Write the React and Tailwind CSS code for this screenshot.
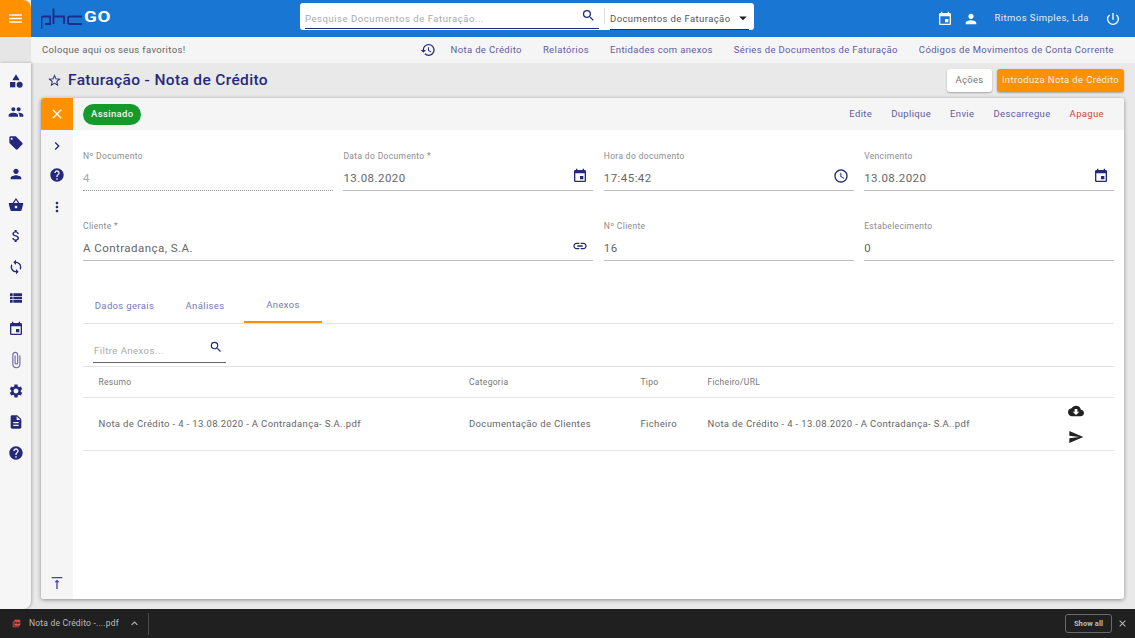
import React from "react";
import { MdMenu, MdCategory, MdPeople, MdLocalOffer, MdPerson, MdShoppingBasket, MdAttachMoney, MdSync, MdViewList, MdEvent, MdAttachFile, MdSettings, MdDescription, MdHelp, MdSearch, MdArrowDropDown, MdPowerSettingsNew, MdHistory, MdStarBorder, MdClose, MdChevronRight, MdMoreVert, MdAccessTime, MdLink, MdCloudDownload, MdSend, MdVerticalAlignTop, MdExpandLess, MdPictureAsPdf } from "react-icons/md";

const navy = "text-[#25297c]";

function Field({ label, value, icon, dotted, muted, className = "" }) {
  return (
    <div className={`relative h-[50px] ${className}`}>
      <div className="h-[22px] pt-[4px] text-[8.5px] leading-[12px] tracking-[0.35px] text-[#8c8c8c]">{label}</div>
      <div className={`flex h-[22px] items-center justify-between pr-[5px] text-[11.5px] tracking-[0.45px] ${muted ? "text-[#a8a8a8]" : "text-[#666]"}`}>
        <span>{value}</span>
        {icon && <span className={`-mt-[7px] ${navy}`}>{icon}</span>}
      </div>
      <div className={dotted ? "border-b border-dotted border-[#9a9a9a]" : "border-b border-[#bdbdbd]"} />
    </div>
  );
}

const sideIcons = [MdCategory, MdPeople, MdLocalOffer, MdPerson, MdShoppingBasket, MdAttachMoney, MdSync, MdViewList, MdEvent, MdAttachFile, MdSettings, MdDescription, MdHelp];

export default function App() {
  return (
    <div className="flex h-[638px] w-[1135px] flex-col overflow-hidden bg-[#e9e9e9] font-['Roboto',sans-serif]">
      <div className="flex min-h-0 flex-1">
        {/* left column */}
        <div className="relative z-10 flex w-[31px] shrink-0 flex-col">
          <div className="flex h-[37px] items-center justify-center rounded-tr-[8px] bg-[#ff9100] text-white">
            <MdMenu size={17} />
          </div>
          <div className="h-[26px] bg-[#e6e6e6]" />
          <div className={`flex flex-1 flex-col items-center rounded-br-[8px] bg-[#f6f6f6] pt-[2px] shadow-[1px_0_3px_rgba(0,0,0,0.25)] ${navy}`}>
            {sideIcons.map((I, i) => (
              <div key={i} className={`flex h-[31px] w-full items-center justify-center ${i === 9 ? "text-[#6d63a8]" : ""}`}>
                <I size={i === 9 ? 18 : 16} className={i === 9 ? "" : ""} />
              </div>
            ))}
          </div>
        </div>

        {/* right column */}
        <div className="flex min-w-0 flex-1 flex-col">
          <header className="flex h-[37px] items-center bg-[#1976d2]">
            <div className="ml-[10px] flex w-[259px] items-center">
              <svg width="41" height="21" viewBox="0 0 41 21" fill="none" stroke="#1f2a8a" strokeWidth="1.8">
                <path d="M0.5 20.5V10.5Q0.5 8.5 2.5 8.5H9V16H4" />
                <path d="M12.5 0.5V16M12.5 8.5H23V16" />
                <path d="M41 8.5H29Q27 8.5 27 10.5V14Q27 16 29 16H41" />
              </svg>
              <span className="ml-[2px] -mt-[3px] text-[15px] font-bold leading-none tracking-[0.5px] text-white [transform:scaleX(1.25)] origin-left">GO</span>
            </div>
            <div className="flex h-[27px] w-[454px] -mt-[5px] items-center rounded-[3px] bg-white">
              <div className="relative flex h-full w-[304px] items-center pl-[5px] pr-[8px] pt-[7px] border-b border-transparent">
                <span className="flex-1 text-[9.5px] tracking-[0.55px] text-[#a9a9a9]">Pesquise Documentos de Faturação...</span>
                <MdSearch size={15} className={`-mt-[7px] ${navy}`} />
                <div className="absolute bottom-0 left-[5px] right-[5px] h-px bg-[#25297c]" />
              </div>
              <div className="h-[16px] w-px bg-[#e0e0e0]" />
              <div className="relative flex h-full flex-1 items-center pl-[5px] pt-[7px]">
                <span className="flex-1 text-[9.5px] tracking-[0.4px] text-[#555]">Documentos de Faturação</span>
                <MdArrowDropDown size={18} className="mr-[2px] -mt-[4px] text-[#222]" />
                <div className="absolute bottom-0 left-[5px] right-[5px] h-px bg-[#25297c]" />
              </div>
            </div>
            <div className="ml-auto flex items-center pr-[14px] text-white">
              <MdEvent size={16} />
              <MdPerson size={16} className="ml-[10px]" />
              <span className="ml-[15px] text-[9.5px] tracking-[0.45px] text-[#e6f0fb]">Ritmos Simples, Lda</span>
              <MdPowerSettingsNew size={16} className="ml-[16px]" />
            </div>
          </header>

          <div className="flex h-[26px] items-center bg-[#f5f5f5] pl-[11px] pr-[21px] text-[9.5px] tracking-[0.35px]">
            <span className="text-[#666]">Coloque aqui os seus favoritos!</span>
            <MdHistory size={16} className={`ml-auto mr-[15px] ${navy}`} />
            <div className="flex gap-[21px] text-[#5f5c9e]">
              <span>Nota de Crédito</span>
              <span>Relatórios</span>
              <span>Entidades com anexos</span>
              <span>Séries de Documentos de Faturação</span>
              <span>Códigos de Movimentos de Conta Corrente</span>
            </div>
          </div>

          <div className="flex min-h-0 flex-1 flex-col px-[10px] pb-[10px] pr-[11px]">
            <div className="flex h-[35px] items-center">
              <MdStarBorder size={15} className={`ml-[6px] ${navy}`} />
              <h1 className={`ml-[6px] text-[15.5px] font-medium tracking-[0.35px] ${navy}`}>Faturação - Nota de Crédito</h1>
              <button className="ml-auto h-[23px] w-[45px] rounded-[3px] bg-white text-[9.5px] tracking-[0.3px] text-[#777] shadow-[0_1px_2px_rgba(0,0,0,0.3)]">Ações</button>
              <button className="ml-[5px] h-[23px] w-[127px] rounded-[3px] bg-[#ff9100] text-[9.5px] tracking-[0.35px] text-[#fff3e0] shadow-[0_1px_2px_rgba(0,0,0,0.3)]">Introduza Nota de Crédito</button>
            </div>

            {/* card */}
            <div className="flex min-h-0 flex-1 overflow-hidden rounded-[3px] bg-white shadow-[0_1px_4px_rgba(0,0,0,0.4)]">
              <div className={`flex w-[32px] shrink-0 flex-col items-center bg-[#f5f5f5] ${navy}`}>
                <div className="flex h-[32px] w-full items-center justify-center bg-[#ff9100] text-white"><MdClose size={16} /></div>
                <div className="mt-[6px] flex h-[20px] items-center"><MdChevronRight size={16} /></div>
                <div className="mt-[9px] flex h-[20px] items-center"><MdHelp size={16} /></div>
                <div className="mt-[12px] flex h-[20px] items-center"><MdMoreVert size={16} /></div>
                <MdVerticalAlignTop size={16} className="mt-auto mb-[8px] text-[#3f4496]" />
              </div>
              <div className="flex min-w-0 flex-1 flex-col">
                <div className="flex h-[32px] items-center bg-[#f5f5f5] pl-[10px] pr-[20px] text-[9.5px] tracking-[0.35px]">
                  <span className="flex h-[21px] items-center rounded-full bg-[#159a2b] px-[8px] text-[9.5px] font-medium text-[#e9f7ea]">Assinado</span>
                  <div className="ml-auto flex gap-[19px] text-[#5f5c9e]">
                    <span>Edite</span>
                    <span>Duplique</span>
                    <span>Envie</span>
                    <span>Descarregue</span>
                    <span className="text-[#d04545]">Apague</span>
                  </div>
                </div>

                <div className="flex min-h-0 flex-1 flex-col pl-[10px] pr-[10px]">
                  <div className="mt-[16px] grid grid-cols-4 gap-x-[10.5px] gap-y-[20px]">
                    <Field label="Nº Documento" value="4" dotted muted />
                    <Field label="Data do Documento *" value="13.08.2020" icon={<MdEvent size={16} />} />
                    <Field label="Hora do documento" value="17:45:42" icon={<MdAccessTime size={16} />} />
                    <Field label="Vencimento" value="13.08.2020" icon={<MdEvent size={16} />} />
                    <Field className="col-span-2" label="Cliente *" value="A Contradança, S.A." icon={<MdLink size={16} />} />
                    <Field label="Nº Cliente" value="16" />
                    <Field label="Estabelecimento" value="0" />
                  </div>

                  {/* tabs */}
                  <div className="mt-[24px] flex h-[34px] items-stretch border-b border-[#e4e4e4] text-[9.5px] tracking-[0.35px] text-[#7a78bb]">
                    <div className="flex w-[83px] items-center justify-center">Dados gerais</div>
                    <div className="flex w-[78px] items-center justify-center">Análises</div>
                    <div className="flex w-[78px] items-center justify-center border-b-2 border-[#ff9100]">Anexos</div>
                  </div>

                  <div className="mt-[12px] ml-[10px] flex h-[27px] w-[133px] items-center justify-between border-b border-[#666] pr-[3px] pt-[4px] text-[9.5px] tracking-[0.45px] text-[#a9a9a9]">
                    <span className="pl-px">Filtre Anexos...</span>
                    <MdSearch size={14} className={`-mt-[8px] ${navy}`} />
                  </div>

                  <div className="mt-[3px] grid h-[32px] grid-cols-[370.5px_171.5px_67px_1fr] items-center border-y border-[#e4e4e4] pl-[15.5px] text-[8.5px] tracking-[0.3px] text-[#777]">
                    <span>Resumo</span><span>Categoria</span><span>Tipo</span><span>Ficheiro/URL</span>
                  </div>
                  <div className="grid h-[53px] grid-cols-[370.5px_171.5px_67px_360px_1fr] items-center border-b border-[#e4e4e4] pl-[15.5px] text-[9.5px] tracking-[0.35px] text-[#666]">
                    <span>Nota de Crédito - 4 - 13.08.2020 - A Contradança- S.A..pdf</span>
                    <span>Documentação de Clientes</span>
                    <span>Ficheiro</span>
                    <span>Nota de Crédito - 4 - 13.08.2020 - A Contradança- S.A..pdf</span>
                    <div className="flex flex-col items-start gap-[10px] text-[#222]">
                      <MdCloudDownload size={16} />
                      <MdSend size={16} />
                    </div>
                  </div>
                </div>
              </div>
            </div>
          </div>
        </div>
      </div>

      {/* download bar */}
      <div className="flex h-[29px] shrink-0 items-center bg-[#202020] pl-[12px] pr-[7px] text-[#bdbdbd]">
        <MdPictureAsPdf size={9} className="text-[#e85050]" />
        <span className="ml-[8px] text-[8.5px] tracking-[0.2px]">Nota de Crédito -....pdf</span>
        <MdExpandLess size={13} className="ml-[9px]" />
        <div className="ml-[7px] h-[22px] w-px bg-[#4a4a4a]" />
        <div className="ml-auto flex h-[19px] w-[47px] items-center justify-center rounded-[3px] border border-[#6a6a6a] text-[7.5px] font-bold tracking-[0.1px]">Show all</div>
        <MdClose size={11} className="ml-[5px]" />
      </div>
    </div>
  );
}
